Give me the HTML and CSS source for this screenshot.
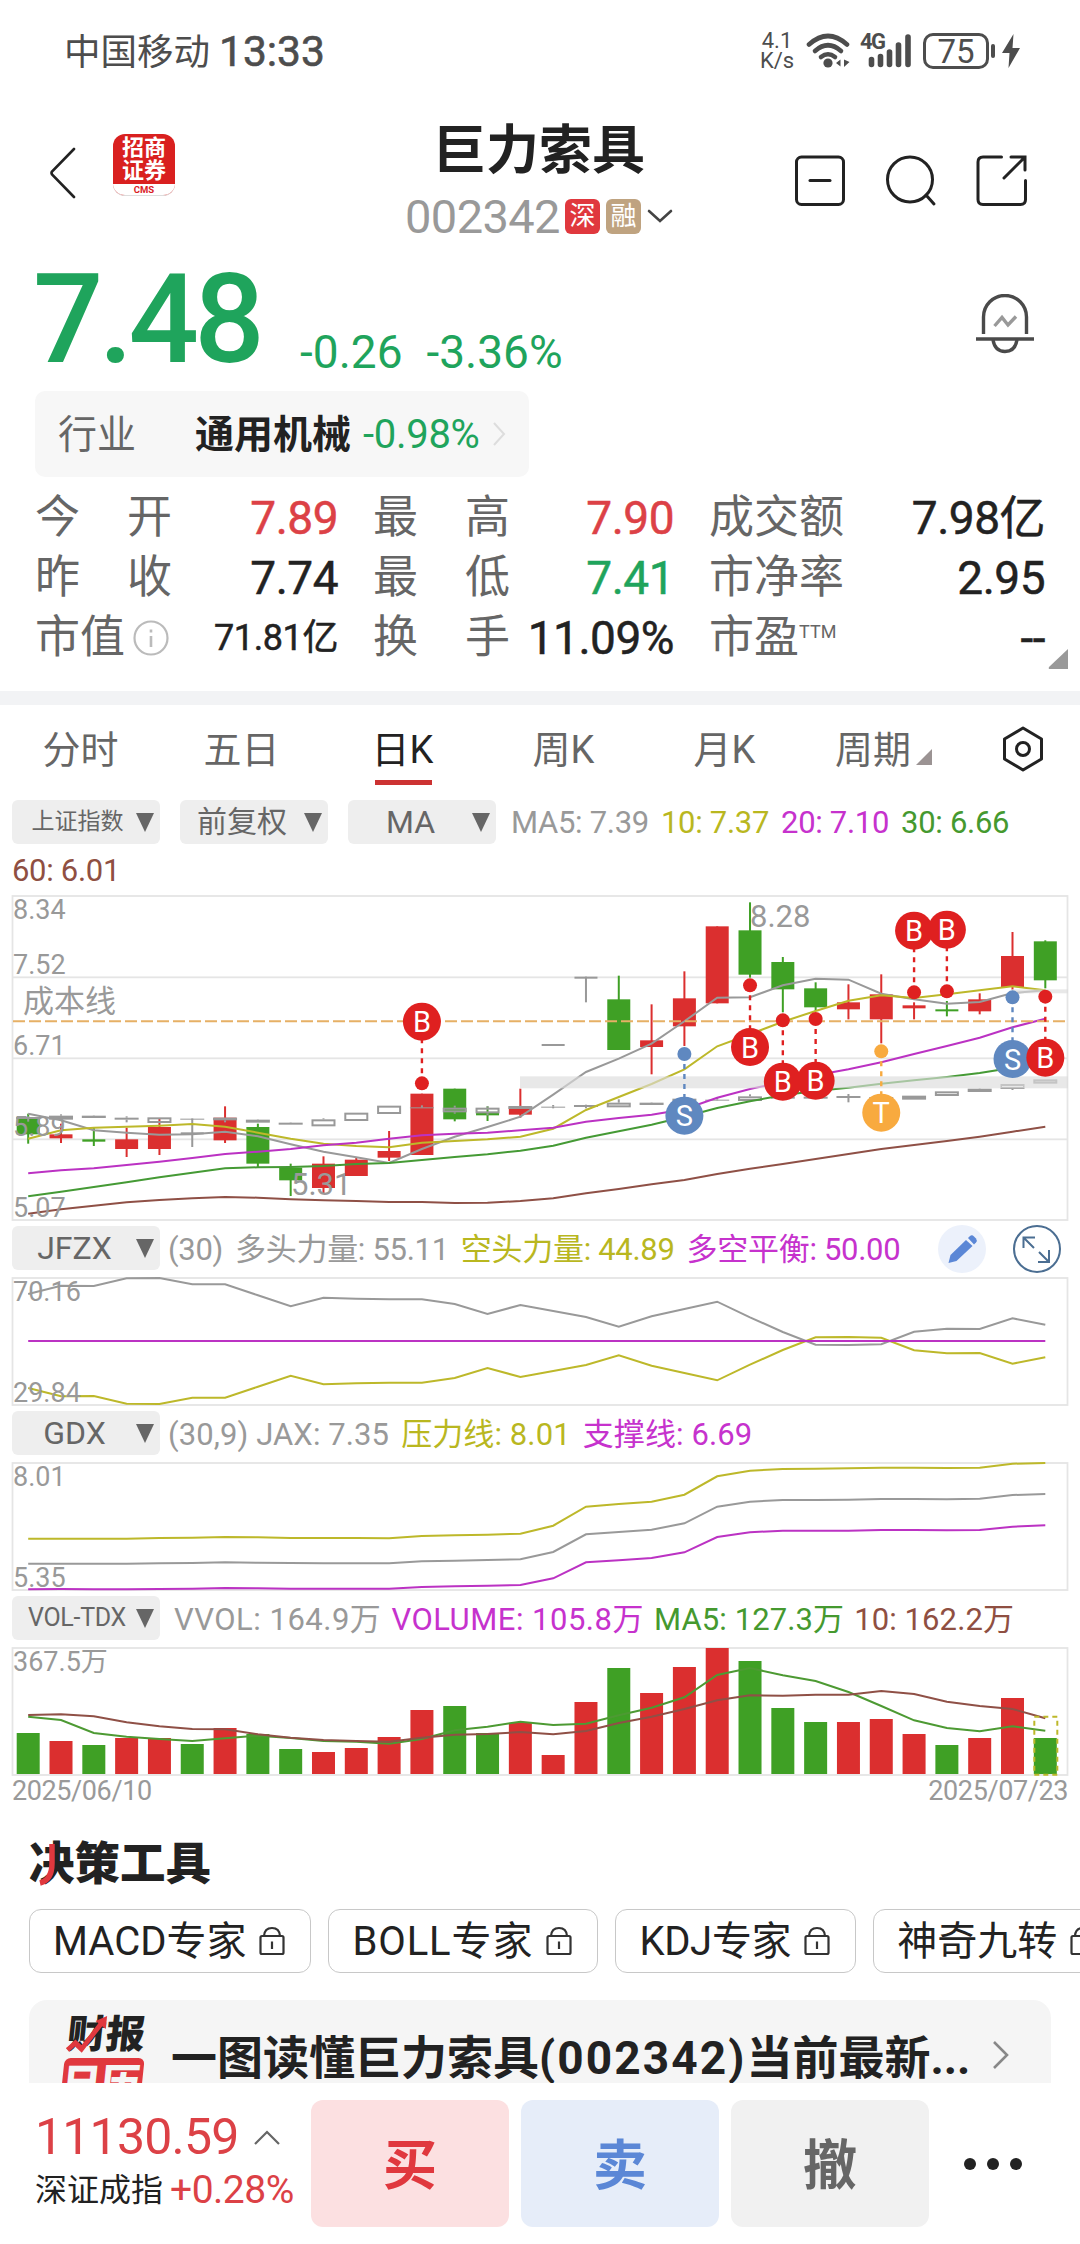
FILE: index.html
```html
<!DOCTYPE html>
<html lang="zh-CN">
<head>
    <meta charset="UTF-8">
    <meta name="viewport" content="width=device-width, initial-scale=1.0">
    <title>巨力索具 002342</title>
    <link rel="stylesheet" href="styles.css">
</head>
<body>
    <div class="status-bar">
        <span class="carrier">中国移动</span>
        <span class="clock">13:33</span>
        <div class="net-speed"><span>4.1</span><span>K/s</span></div>
        <svg class="wifi" width="46" height="36" viewBox="0 0 46 36">
            <g fill="none" stroke="#4d4d4d" stroke-width="4.6" stroke-linecap="round">
                <path d="M3 11.500Q22 -5.500 41 11.500"/>
                <path d="M9 18Q22 6.500 35 18"/>
                <path d="M15 24Q22 18.500 29 24"/>
            </g>
            <circle cx="22" cy="30" r="4.600" fill="#4d4d4d"/>
            <path d="M30 30L34.500 26.500V33.500ZM38 26.500L43.500 29L38 34Z" fill="#4d4d4d"/>
        </svg>
        <div class="signal">
            <span class="signal-type">4G</span>
            <svg width="46" height="36" viewBox="0 0 46 36">
                <path d="M4.500 26.500V31.500M13.500 23.500V31.500M22.500 19V31.500M31.500 12V31.500M41 4V31.500" stroke="#4d4d4d" stroke-width="5.600" stroke-linecap="round"/>
            </svg>
        </div>
        <div class="battery">75</div>
        <svg class="bolt" width="30" height="36" viewBox="0 0 30 36">
            <path d="M2 13V23" stroke="#4d4d4d" stroke-width="4" stroke-linecap="round"/>
            <path d="M22.500 1L11 20H18.500L17.500 35L29 15H21.500Z" fill="#4d4d4d"/>
        </svg>
    </div>

    <header class="header">
        <div class="header-left">
            <svg width="26" height="52" viewBox="0 0 26 52">
                <path d="M24 2L2 24.500Q1 26 2 27.500L24 50" fill="none" stroke="#222" stroke-width="2.600" stroke-linecap="round"/>
            </svg>
            <div class="logo">
                <div class="logo-name">招商<br>证券</div>
                <div class="logo-sub">CMS</div>
            </div>
        </div>
        <div class="header-title">
            <h1>巨力索具</h1>
            <div class="code-row">
                <span class="code">002342</span>
                <span class="badge badge-sz">深</span>
                <span class="badge badge-rz">融</span>
                <svg width="26" height="14" viewBox="0 0 26 14">
                    <path d="M2 2L13 12L24 2" fill="none" stroke="#444" stroke-width="2.600" stroke-linecap="round"/>
                </svg>
            </div>
        </div>
        <div class="header-icons">
            <svg width="52" height="52" viewBox="0 0 52 52">
                <rect x="2.500" y="2" width="47" height="47.500" rx="5"/>
                <path d="M16 25.500H36"/>
            </svg>
            <svg width="52" height="52" viewBox="0 0 52 52">
                <circle cx="25" cy="24.500" r="22.500"/>
                <path d="M41 40L49 49"/>
            </svg>
            <svg width="52" height="52" viewBox="0 0 52 52">
                <path d="M25.500 2H7Q2 2 2 7V44.500Q2 49.500 7 49.500H44.500Q49.500 49.500 49.500 44.500V25.500M35 2H49V15M49 2L28 23"/>
            </svg>
        </div>
    </header>

    <div class="quote">
        <span class="price">7.48</span>
        <span class="change">-0.26</span>
        <span class="change">-3.36%</span>
        <svg class="bell" width="58" height="60" viewBox="0 0 58 60">
            <g fill="none" stroke="#4a4a4a" stroke-width="3.400">
                <path d="M7.500 40V23A21.500 21.500 0 0 1 50.500 23V40"/>
                <path d="M0 45H58"/>
                <path d="M17 46Q19 57.500 29 57.500Q39 57.500 41 46"/>
                <path d="M18.500 32L26 23.500L32 31L40 22.500" stroke="#999"/>
            </g>
        </svg>
    </div>

    <div class="industry">
        <span class="industry-label">行业</span>
        <b>通用机械</b>
        <span class="down">-0.98%</span>
        <svg width="14" height="26" viewBox="0 0 14 26"><path d="M2 2L12 13L2 24" fill="none" stroke="#ddd" stroke-width="2"/></svg>
    </div>

    <div class="stats">
        <div class="stat"><span class="label"><i>今</i><i>开</i></span><span class="value up">7.89</span></div>
        <div class="stat"><span class="label"><i>最</i><i>高</i></span><span class="value up">7.90</span></div>
        <div class="stat"><span class="label">成交额</span><span class="value">7.98亿</span></div>
        <div class="stat"><span class="label"><i>昨</i><i>收</i></span><span class="value">7.74</span></div>
        <div class="stat"><span class="label"><i>最</i><i>低</i></span><span class="value down">7.41</span></div>
        <div class="stat"><span class="label">市净率</span><span class="value">2.95</span></div>
        <div class="stat">
            <span class="label">市值<svg width="36" height="36" viewBox="0 0 36 36"><circle cx="18" cy="18" r="16.500" fill="none" stroke="#bbb" stroke-width="2.200"/><path d="M18 16V27M18 9.500V12.500" stroke="#bbb" stroke-width="2.600"/></svg></span>
            <span class="value small">71.81亿</span>
        </div>
        <div class="stat"><span class="label"><i>换</i><i>手</i></span><span class="value">11.09%</span></div>
        <div class="stat"><span class="label">市盈<sup>TTM</sup></span><span class="value">--</span></div>
        <svg class="stats-more" width="20" height="20" viewBox="0 0 20 20"><path d="M20 0V20H2Q0 20 1 18Z" fill="#999"/></svg>
    </div>

    <div class="divider"></div>

    <nav class="tabs">
        <span class="tab">分时</span>
        <span class="tab">五日</span>
        <span class="tab active">日K</span>
        <span class="tab">周K</span>
        <span class="tab">月K</span>
        <span class="tab tab-period">周期<svg width="16" height="16" viewBox="0 0 16 16"><path d="M16 0V16H0Z" fill="#9b9393"/></svg></span>
        <svg class="settings" width="42" height="46" viewBox="0 0 42 46">
            <path d="M21 2L39.500 13V33L21 44L2.500 33V13Z" fill="none" stroke="#222" stroke-width="3" stroke-linejoin="round"/>
            <circle cx="21" cy="23" r="6.500" fill="none" stroke="#222" stroke-width="3"/>
        </svg>
    </nav>

    <div class="legend legend-main">
        <button class="select small">上证指数</button>
        <button class="select medium">前复权</button>
        <button class="select">MA</button>
        <span class="c-gray">MA5: 7.39</span>
        <span class="c-yellow">10: 7.37</span>
        <span class="c-magenta">20: 7.10</span>
        <span class="c-green">30: 6.66</span>
        <span class="c-brown">60: 6.01</span>
    </div>
    <svg class="chart" id="kline" width="1080" height="328"></svg>

    <div class="legend">
        <button class="select">JFZX</button>
        <span class="c-gray">(30)</span>
        <span class="c-gray">多头力量: 55.11</span>
        <span class="c-yellow">空头力量: 44.89</span>
        <span class="c-magenta">多空平衡: 50.00</span>
        <svg class="tools" width="124" height="50" viewBox="0 0 124 50">
            <circle cx="25" cy="25" r="24" fill="#ecf1fb"/>
            <path d="M11.500 39L13.500 31L29 16L35.500 22L19.500 37Z" fill="#5b87d6"/>
            <path d="M31 14L33 12Q35 10.500 37 12.500L39 14.500Q40.500 16.500 39 18.500L37 20.500Z" fill="#5b87d6"/>
            <g fill="none" stroke="#4b6e92" stroke-width="2">
                <circle cx="100" cy="25" r="23"/>
                <path d="M97 24L86.500 13.500M86.500 24V13.500H98M102 28L112 38M101 38H112V26"/>
            </g>
        </svg>
    </div>
    <svg class="chart" id="jfzx" width="1080" height="131"></svg>

    <div class="legend legend-gdx">
        <button class="select">GDX</button>
        <span class="c-gray">(30,9) JAX: 7.35</span>
        <span class="c-yellow">压力线: 8.01</span>
        <span class="c-magenta">支撑线: 6.69</span>
    </div>
    <svg class="chart" id="gdx" width="1080" height="131"></svg>

    <div class="legend legend-vol">
        <button class="select vol">VOL-TDX</button>
        <span class="c-gray">VVOL: 164.9万</span>
        <span class="c-magenta">VOLUME: 105.8万</span>
        <span class="c-green">MA5: 127.3万</span>
        <span class="c-brown">10: 162.2万</span>
    </div>
    <svg class="chart" id="volume" width="1080" height="131"></svg>
    <div class="dates"><span>2025/06/10</span><span>2025/07/23</span></div>

    <h2 class="section-title">决策工具
        <svg width="22" height="44" viewBox="0 0 22 44"><path d="M14 1V20Q14 37 2 40" fill="none" stroke="#e0383e" stroke-width="5.500"/></svg>
    </h2>
    <div class="chips">
        <span class="chip">MACD专家<svg width="26" height="30"><use href="#lock"/></svg></span>
        <span class="chip chip-boll">BOLL专家<svg width="26" height="30"><use href="#lock"/></svg></span>
        <span class="chip chip-kdj">KDJ专家<svg width="26" height="30"><use href="#lock"/></svg></span>
        <span class="chip">神奇九转<svg width="26" height="30"><use href="#lock"/></svg></span>
    </div>
    <div class="card">
        <div class="card-logo">
            <span class="card-logo-top">财报</span>
            <span class="card-logo-bottom">日历</span>
            <svg width="44" height="38" viewBox="0 0 44 38"><path d="M2 34L9 27L16 33L34 6" fill="none" stroke="#e0383e" stroke-width="5"/><path d="M27 5L38 0V13Z" fill="#e0383e"/></svg>
        </div>
        <b>一图读懂巨力索具<span>(002342)</span>当前最新...</b>
        <svg width="18" height="30" viewBox="0 0 18 30"><path d="M2 2L15 15L2 28" fill="none" stroke="#888" stroke-width="2.600"/></svg>
    </div>

    <footer class="trade-bar">
        <div class="index">
            <div class="index-value">11130.59<svg width="26" height="15" viewBox="0 0 26 15"><path d="M1 14L13 2L25 14" fill="none" stroke="#666" stroke-width="2.200"/></svg></div>
            <div class="index-name">深证成指<span>+0.28%</span></div>
        </div>
        <button class="buy">买</button>
        <button class="sell">卖</button>
        <button class="cancel">撤</button>
        <div class="more"><i></i><i></i><i></i></div>
    </footer>

    <svg width="0" height="0" class="defs">
        <symbol id="lock" viewBox="0 0 26 30">
            <g fill="none" stroke="#333" stroke-width="2.200">
                <rect x="1.500" y="10" width="23" height="18" rx="1.500"/>
                <path d="M5 10Q5.500 2 13 2Q20.500 2 21 10M13 15.500V23"/>
            </g>
        </symbol>
    </svg>

    <script src="script.js"></script>
</body>
</html>
```
FILE: styles.css
```css
* {
    box-sizing: border-box;
}
body {
    margin: 0;
    width: 1080px;
    height: 2244px;
    overflow: hidden;
    background-color: #fff;
    color: #222;
    font-family: Roboto, "Noto Sans CJK SC", sans-serif;
    display: flex;
    flex-direction: column;
}
svg {
    display: block;
    flex: none;
}
i {
    font-style: normal;
}
button {
    border: 0;
    padding: 0;
    font-family: inherit;
}
.defs {
    position: absolute;
}
.up {
    color: #dc4146;
}
.down {
    color: #1fa45c;
}

/* status bar */
.status-bar {
    height: 102px;
    padding: 0 59px 0 64px;
    display: flex;
    align-items: center;
    color: #4d4d4d;
    flex: none;
}
.carrier {
    font-size: 36.500px;
    padding-bottom: 4px;
}
.clock {
    margin-left: 9px;
    font-size: 42.500px;
    -webkit-text-stroke: 0.6px #4d4d4d;
}
.net-speed {
    margin-left: auto;
    width: 34px;
    font-size: 22px;
    line-height: 20px;
    display: flex;
    flex-direction: column;
    align-items: center;
}
.wifi {
    margin-left: 12px;
}
.signal {
    position: relative;
    margin-left: 15px;
}
.signal-type {
    position: absolute;
    left: -7px;
    top: 0;
    font-size: 22px;
    line-height: 18px;
    font-weight: 700;
    letter-spacing: -1.5px;
}
.battery {
    width: 66px;
    height: 36px;
    margin-left: 10px;
    border: 3px solid #4d4d4d;
    border-radius: 10px;
    font-size: 33px;
    line-height: 31px;
    text-align: center;
}
.bolt {
    margin-left: 2px;
}

/* header */
.header {
    height: 150px;
    padding: 0 52px 0 50px;
    display: grid;
    grid-template-columns: 1fr auto 1fr;
    flex: none;
}
.header-left {
    display: flex;
    gap: 37px;
    padding-top: 45px;
}
.logo {
    width: 62px;
    height: 62px;
    margin-top: -13px;
    border-radius: 12px;
    background-color: #d9201f;
    overflow: hidden;
    border-bottom: 1px solid #ddd;
}
.logo-name {
    height: 50px;
    padding-top: 2px;
    color: #fff;
    font-size: 22px;
    font-weight: 700;
    line-height: 23px;
    text-align: center;
}
.logo-sub {
    height: 12px;
    background-color: #fff;
    color: #d9201f;
    font-size: 9.500px;
    font-weight: 700;
    line-height: 11px;
    text-align: center;
}
.header-title {
    text-align: center;
}
.header-title h1 {
    margin: 12px 0 0;
    font-size: 53px;
    line-height: 74px;
    font-weight: 700;
}
.code-row {
    display: flex;
    align-items: center;
    height: 56px;
}
.code {
    color: #999;
    font-size: 47px;
    letter-spacing: -0.6px;
    margin-right: 5px;
}
.badge {
    width: 35px;
    height: 35px;
    border-radius: 6px;
    color: #fff;
    font-size: 26px;
    line-height: 34px;
    margin-right: 6px;
}
.badge-sz {
    background-color: #e0383e;
}
.badge-rz {
    background-color: #bfa380;
}
.header-icons {
    display: flex;
    justify-content: flex-end;
    gap: 39px;
    padding-top: 53px;
}
.header-icons svg {
    fill: none;
    stroke: #222;
    stroke-width: 3;
    stroke-linecap: round;
}

/* quote */
.quote {
    height: 139px;
    padding: 0 46px 0 33px;
    display: flex;
    align-items: flex-start;
    color: #1fa45c;
    flex: none;
}
.price {
    margin: 2px 40px 0 0;
    font-size: 124px;
    line-height: 132px;
    font-weight: 500;
    letter-spacing: -4.7px;
}
.change {
    margin: 73px 24px 0 0;
    font-size: 46px;
    line-height: 54px;
}
.bell {
    margin: 42px 0 0 auto;
}

.industry {
    width: 494px;
    height: 86px;
    margin-left: 35px;
    padding: 0 0 6px 23px;
    border-radius: 10px;
    background-color: #f7f7f7;
    display: flex;
    align-items: center;
    font-size: 39px;
    flex: none;
}
.industry-label {
    width: 137px;
    color: #666;
}
.industry .down {
    margin: 6px 0 0 12px;
    font-size: 40px;
    letter-spacing: -0.3px;
}
.industry svg {
    margin: 5px 0 0 12px;
}

.stats {
    position: relative;
    height: 214px;
    padding: 11px 36px 0 35px;
    display: grid;
    grid-template-columns: 302px 300px 335px;
    grid-template-rows: repeat(3, 60px);
    column-gap: 36px;
    flex: none;
}
.stat {
    display: flex;
    justify-content: space-between;
    align-items: center;
    line-height: 60px;
    white-space: nowrap;
}
.label {
    width: 137px;
    color: #666;
    font-size: 45px;
    display: flex;
    justify-content: space-between;
    align-items: center;
}
.label svg {
    margin-right: 3px;
}
.stat sup {
    font-size: 18px;
    line-height: 24px;
    margin: 0 auto 12px 0;
}
.value {
    font-size: 46px;
    letter-spacing: -0.5px;
    margin-right: -1px;
    -webkit-text-stroke: 0.5px;
}
.value.small {
    font-size: 36px;
    letter-spacing: -0.4px;
}
.stats-more {
    position: absolute;
    right: 12px;
    bottom: 22px;
}
.divider {
    height: 14px;
    background-color: #f2f3f5;
    flex: none;
}

/* period tabs */
.tabs {
    height: 95px;
    padding: 0 36px 6px 0;
    display: flex;
    align-items: center;
    color: #666;
    font-size: 38px;
    flex: none;
}
.tab {
    width: 161px;
    height: 86px;
    line-height: 86px;
    display: flex;
    justify-content: center;
    align-items: center;
    position: relative;
}
.tab svg {
    margin: 15px 0 0 5px;
}
.tab-period {
    margin-left: -2px;
}
.tab.active {
    color: #222;
}
.tab.active::after {
    content: "";
    position: absolute;
    left: 53px;
    bottom: 8px;
    width: 57px;
    height: 5px;
    background-color: #cc3232;
}
.settings {
    margin: -2px 0 0 auto;
}

/* indicator legends */
.legend {
    height: 56px;
    padding: 5px 12px 0;
    display: flex;
    flex-wrap: wrap;
    font-size: 31px;
    line-height: 47px;
    letter-spacing: -0.3px;
    white-space: nowrap;
    column-gap: 12px;
    position: relative;
    flex: none;
}
.legend-main {
    height: 95px;
    padding-top: 0;
    line-height: 45px;
}
.legend-main .select {
    margin-right: 8px;
}
.legend-main .select + .c-gray {
    margin-left: -5px;
}
.select {
    width: 148px;
    height: 44px;
    border-radius: 6px;
    background-color: #eee;
    color: #666;
    font-size: 32px;
    line-height: 44px;
    display: flex;
    justify-content: space-between;
    align-items: center;
    padding-right: 6px;
    margin-right: -4px;
}
.select::before {
    content: "";
    width: 1px;
}
.select::after {
    content: "";
    border: 9px solid transparent;
    border-top: 19px solid #666;
    border-bottom: 0;
}
.select.medium {
    font-size: 30px;
}
.select.small {
    font-size: 23px;
}
.select.small::before {
    width: 7px;
}
.select.vol {
    font-size: 25px;
    letter-spacing: -0.3px;
    margin-right: 4px;
}
.select.medium::before {
    width: 0;
}
.select.vol::before {
    width: 6px;
}
.tools {
    position: absolute;
    right: 19px;
    top: 3px;
}
.c-gray { color: #999; }
.c-yellow { color: #b9b71f; }
.c-magenta { color: #c632cd; }
.c-green { color: #45992f; }
.c-brown { color: #8f4f42; }
.legend-gdx {
    letter-spacing: 0.1px;
}
.legend-vol {
    letter-spacing: 0.1px;
    column-gap: 10px;
}
.legend-vol .c-gray,
.legend-vol .c-magenta {
    letter-spacing: 0.5px;
}

.chart {
    margin-bottom: -2px;
}
.chart text {
    fill: #999;
    font-size: 27px;
}
.chart .note {
    font-size: 31px;
}
.chart .mark {
    fill: #fff;
    font-size: 29px;
    text-anchor: middle;
}
.dates {
    height: 37px;
    padding: 0 12px;
    display: flex;
    justify-content: space-between;
    color: #999;
    font-size: 27px;
    letter-spacing: -0.4px;
    line-height: 31px;
    flex: none;
}

/* tools */
.section-title {
    position: relative;
    height: 96px;
    margin: 0;
    padding: 19px 0 0 29px;
    font-size: 45.500px;
    line-height: 66px;
    font-weight: 900;
    flex: none;
}
.section-title svg {
    position: absolute;
    left: 38px;
    top: 30px;
}
.chips {
    display: flex;
    gap: 17px;
    padding-left: 29px;
    flex: none;
}
.chip {
    height: 64px;
    padding: 2px 25px 0 23px;
    border: 1.500px solid #c8c8c8;
    border-radius: 12px;
    font-size: 40px;
    line-height: 62px;
    white-space: nowrap;
    display: flex;
    align-items: center;
    gap: 13px;
    flex: none;
}
.chip-boll {
    letter-spacing: 0.9px;
}
.chip-kdj {
    letter-spacing: -0.3px;
}
.chip svg {
    margin-top: -3px;
}
.card {
    height: 110px;
    margin: 27px 29px 0;
    padding: 0 41px 0 36px;
    border-radius: 18px;
    background-color: #f5f5f5;
    display: flex;
    align-items: center;
    font-size: 46px;
    white-space: nowrap;
    flex: none;
}
.card b {
    margin-top: -2px;
}
.card b span {
    letter-spacing: 2.1px;
}
.card > svg {
    margin-left: auto;
}
.card-logo {
    position: relative;
    height: 78px;
    width: 80px;
    margin-right: 26px;
    font-weight: 900;
    transform: skewX(-6deg);
}
.card-logo svg {
    position: absolute;
    left: 0;
    top: 0;
}
.card-logo-top,
.card-logo-bottom {
    display: block;
    font-size: 39px;
    line-height: 38px;
}
.card-logo-bottom {
    margin-top: 4px;
    line-height: 52px;
    border-radius: 6px;
    background-color: #e0383e;
    color: #f5f5f5;
}

/* bottom bar */
.trade-bar {
    position: absolute;
    left: 0;
    top: 2083px;
    width: 1080px;
    height: 161px;
    padding: 17px 0 0 35px;
    background-color: #fff;
    display: flex;
    gap: 12px;
}
.index {
    width: 264px;
    white-space: nowrap;
}
.index-value {
    height: 72px;
    padding-top: 2px;
    color: #dc4146;
    font-size: 50px;
    letter-spacing: -0.8px;
    display: flex;
    align-items: center;
    gap: 15px;
}
.index-name {
    font-size: 32px;
    line-height: 36px;
    display: flex;
    align-items: center;
    gap: 7px;
}
.index-name span {
    color: #dc4146;
    font-size: 39px;
    letter-spacing: -0.5px;
}
.trade-bar button {
    width: 198px;
    height: 127px;
    padding-bottom: 5px;
    border-radius: 12px;
    font-size: 54px;
    font-weight: 700;
}
.buy {
    background-color: #fce0e1;
    color: #e0383e;
}
.sell {
    background-color: #e6edf9;
    color: #5b87d6;
}
.cancel {
    background-color: #f1f1f1;
    color: #666;
}
.more {
    height: 127px;
    margin-left: 23px;
    display: flex;
    align-items: center;
    gap: 11px;
}
.more i {
    width: 12px;
    height: 12px;
    border-radius: 50%;
    background-color: #222;
}
```
FILE: script.js
```js
const RED = '#db2f2f';
const GREEN = '#3fa025';
const GRAY = '#999';
const YELLOW = '#bdb82a';
const MAGENTA = '#bb32c3';
const BROWN = '#8f5046';

const STEP = 32.81;
const xAt = i => 28.2 + i * STEP;

function line(points, y, color) {
    const d = points.map((v, i) => xAt(i).toFixed(1) + ',' + y(v).toFixed(1)).join(' ');
    return `<polyline points="${d}" fill="none" stroke="${color}" stroke-width="2"/>`;
}
function rect(x, y, w, h, attrs) {
    return `<rect x="${x}" y="${y}" width="${w}" height="${h}" ${attrs}/>`;
}
function frame(h) {
    return rect(12.5, 1, 1055, h, 'fill="none" stroke="#e5e5e5" stroke-width="1.8"');
}
function label(x, y, text, cls) {
    return `<text x="${x}" y="${y}" class="${cls || ''}">${text}</text>`;
}

// Candles and averages, three units to a pixel
function drawKline() {
    const y = v => (v - 44) / 3;
    // colour, high, body top, body bottom, low
    const candles = [
        ['g', 700, 710, 762, 790], ['r', 730, 762, 774, 788], ['g', 740, 777, 784, 797], ['r', 742, 777, 806, 830],
        ['r', 715, 740, 806, 824], ['n', 715, 756, 762, 800], ['r', 678, 712, 780, 788], ['g', 730, 740, 850, 860],
        ['g', 850, 862, 900, 947], ['r', 828, 850, 923, 940], ['r', 832, 838, 887, 887], ['r', 752, 812, 832, 842],
        ['r', 640, 640, 824, 824], ['g', 625, 625, 717, 723], ['g', 678, 698, 705, 722], ['r', 625, 680, 703, 712],
        ['n', 491, 491, 497, 497], ['n', 289, 289, 295, 366], ['g', 286, 357, 509, 509], ['r', 372, 480, 500, 582],
        ['r', 273, 354, 438, 497], ['r', 138, 138, 369, 369], ['g', 66, 150, 283, 292], ['g', 230, 245, 327, 396],
        ['g', 306, 324, 381, 392], ['r', 312, 366, 387, 417], ['r', 282, 342, 417, 489], ['r', 366, 375, 384, 417],
        ['g', 362, 387, 393, 408], ['r', 339, 357, 393, 402], ['r', 155, 227, 320, 328], ['g', 180, 183, 300, 324]
    ];
    // Shanghai index overlay
    const index = [
        [708, 710, 716, 724], [702, 706, 718, 718], [705, 706, 713, 713], [708, 712, 718, 726],
        [711, 711, 728, 728], [714, 715, 716, 718], [711, 712, 720, 726], [717, 718, 727, 727],
        [726, 727, 733, 733], [714, 717, 738, 738], [697, 697, 722, 722], [676, 676, 701, 701],
        [675, 681, 682, 683], [676, 682, 696, 700], [678, 682, 699, 705], [676, 677, 686, 686],
        [674, 679, 680, 684], [673, 674, 680, 684], [657, 667, 681, 681], [666, 667, 674, 674],
        [654, 655, 662, 662], [650, 658, 659, 660], [642, 648, 662, 662], [648, 649, 655, 655],
        [648, 649, 655, 655], [641, 647, 653, 666], [649, 650, 655, 655], [646, 646, 658, 658],
        [633, 633, 647, 647], [624, 625, 635, 635], [611, 611, 626, 629], [597, 597, 610, 610]
    ];
    const ma5 = [700, 720, 750, 757, 763, 762, 754, 768, 792, 814, 831, 848, 806, 769, 740, 709, 643, 575, 535, 490, 423, 352, 351, 315, 295, 298, 340, 357, 370, 365, 338, 330];
    const ma10 = [775, 750, 742, 739, 736, 731, 739, 757, 775, 790, 797, 801, 787, 782, 777, 769, 745, 689, 650, 611, 567, 498, 462, 424, 392, 361, 345, 353, 342, 330, 318, 330];
    const ma20 = [879, 870, 864, 854, 844, 833, 821, 814, 806, 795, 787, 775, 765, 760, 757, 750, 742, 724, 713, 703, 687, 652, 626, 605, 585, 567, 546, 521, 497, 472, 441, 415];
    const ma30 = [948, 934, 920, 906, 891, 877, 864, 861, 860, 857, 851, 848, 839, 830, 822, 811, 796, 772, 753, 733, 709, 683, 663, 645, 632, 622, 610, 600, 590, 578, 562, 550];
    const ma60 = [1000, 987, 976, 966, 959, 954, 950, 952, 957, 960, 962, 965, 965, 968, 967, 962, 954, 939, 926, 912, 899, 881, 865, 851, 836, 821, 806, 794, 782, 769, 754, 739];
    // bar, letter, colour, dot, badge
    const marks = [
        [12, 'B', '#df2020', 609, 424], [20, 'S', '#5f88c0', 521, 706], [22, 'B', '#df2020', 315, 500],
        [23, 'B', '#df2020', 420, 604], [24, 'B', '#df2020', 416, 601], [26, 'T', '#f8aa3f', 513, 697],
        [27, 'B', '#df2020', 336, 151], [28, 'B', '#df2020', 333, 148], [30, 'S', '#5f88c0', 351, 536],
        [31, 'B', '#df2020', 349, 532]
    ];
    const colors = { r: RED, g: GREEN, n: GRAY };

    let out = frame(324);
    for (const v of [291, 534, 777]) {
        out += rect(13, y(v) - 0.9, 1055, 1.8, 'fill="#e5e5e5"');
    }
    candles.forEach(([c, high, top, bottom, low], i) => {
        out += rect(xAt(i) - 1, y(high), 2, (low - high) / 3, `fill="${colors[c]}"`);
        out += rect(xAt(i) - 11.5, y(top), 23, (bottom - top) / 3, `fill="${colors[c]}"`);
    });
    index.forEach(([high, top, bottom, low], i) => {
        const h = (bottom - top) / 3;
        out += rect(xAt(i) - 1, y(high), 2, (top - high) / 3, `fill="${GRAY}"`);
        out += rect(xAt(i) - 1, y(bottom), 2, (low - bottom) / 3, `fill="${GRAY}"`);
        if (h > 3.2) {
            out += rect(xAt(i) - 11, y(top) + 1, 22, h - 2, `fill="none" stroke="${GRAY}" stroke-width="2"`);
        } else {
            out += rect(xAt(i) - 12, y(top), 24, Math.max(h, 1), `fill="${GRAY}"`);
        }
    });
    out += line(ma5, y, GRAY) + line(ma10, y, YELLOW) + line(ma20, y, MAGENTA);
    out += line(ma30, y, '#459a35') + line(ma60, y, BROWN);
    out += rect(520, y(588), 548, 12, 'fill="#dcdcdc" fill-opacity="0.65"');
    out += rect(1012, y(327), 56, 4, 'fill="#dcdcdc" fill-opacity="0.65"');
    out += `<path d="M13 ${y(423)}H1067" stroke="#e6b065" stroke-width="2" stroke-dasharray="12 4"/>`;

    out += label(13, y(117), '8.34') + label(13, y(281), '7.52') + label(13, y(525), '6.71');
    out += label(13, y(767), '5.89') + label(13, y(1010), '5.07');
    out += label(23, y(395), '成本线', 'note') + label(750, y(141), '8.28', 'note') + label(291, y(944), '5.31', 'note');

    for (const [i, letter, color, dot, badge] of marks) {
        const x = xAt(i);
        out += `<path d="M${x} ${y(dot)}V${y(badge)}" stroke="${color}" stroke-width="2.4" stroke-dasharray="5 5"/>`;
        out += `<circle cx="${x}" cy="${y(dot)}" r="7" fill="${color}"/>`;
        out += `<circle cx="${x}" cy="${y(badge)}" r="19" fill="${color}"/>`;
        out += label(x, y(badge) + 10.5, letter, 'mark');
    }
    document.getElementById('kline').innerHTML = out;
}

function drawJfzx() {
    const y = v => (v - 171) / 3;
    const bull = [222, 197, 198, 175, 174, 193, 193, 226, 259, 233, 236, 238, 238, 252, 282, 255, 273, 291, 320, 289, 267, 245, 292, 336, 374, 375, 373, 335, 326, 327, 295, 314];
    const bear = bull.map(v => 726 - v);
    document.getElementById('jfzx').innerHTML = frame(127) +
        line(bull, y, GRAY) + line(bear, y, YELLOW) + line(bull.map(() => 363), y, MAGENTA) +
        label(13, y(243), '70.16') + label(13, y(547), '29.84');
}

function drawGdx() {
    const y = v => (v - 726) / 3;
    const jax = [1031, 1031, 1031, 1031, 1030, 1029, 1027, 1028, 1029, 1030, 1030, 1030, 1024, 1022, 1020, 1018, 996, 943, 936, 929, 910, 860, 845, 840, 840, 839, 837, 837, 838, 836, 825, 822];
    const upper = [956, 956, 956, 956, 954, 953, 951, 952, 954, 954, 954, 955, 948, 946, 944, 941, 917, 860, 852, 845, 824, 769, 752, 747, 746, 745, 743, 743, 744, 743, 731, 729];
    const lower = [1108, 1107, 1108, 1108, 1107, 1106, 1104, 1105, 1106, 1106, 1106, 1106, 1101, 1099, 1097, 1095, 1075, 1027, 1021, 1014, 997, 951, 937, 932, 932, 932, 930, 930, 931, 930, 920, 916];
    document.getElementById('gdx').innerHTML = frame(127) +
        line(jax, y, GRAY) + line(upper, y, YELLOW) + line(lower, y, MAGENTA) +
        label(13, y(797), '8.01') + label(13, y(1100), '5.35');
}

function drawVolume() {
    const y = v => (v - 171) / 3;
    const tops = [429, 453, 465, 444, 444, 462, 414, 432, 477, 486, 474, 441, 360, 348, 429, 399, 495, 336, 234, 309, 231, 174, 213, 354, 396, 396, 387, 432, 465, 444, 324, 444];
    const colors = 'grgrrgrggrrrrggrrrgrrrgggrrrgrrg';
    const ma5 = [380, 390, 429, 440, 447, 453, 445, 437, 444, 453, 455, 461, 447, 421, 410, 395, 405, 401, 376, 353, 322, 255, 234, 256, 273, 306, 348, 391, 414, 424, 409, 422];
    const ma10 = [375, 373, 379, 397, 409, 417, 418, 433, 443, 450, 453, 455, 443, 434, 432, 426, 433, 423, 399, 380, 357, 331, 316, 317, 314, 314, 303, 312, 335, 348, 357, 385];
    let out = frame(127);
    tops.forEach((v, i) => {
        out += rect(xAt(i) - 11.5, y(v), 23, (552 - v) / 3, `fill="${colors[i] === 'r' ? RED : GREEN}"`);
    });
    out += line(ma5, y, '#4d9a33') + line(ma10, y, BROWN);
    out += rect(xAt(31) - 11, y(380), 23, 58, 'fill="none" stroke="#bdb82a" stroke-width="2" stroke-dasharray="5 4"');
    out += label(13, y(243), '367.5万');
    document.getElementById('volume').innerHTML = out;
}

drawKline();
drawJfzx();
drawGdx();
drawVolume();
```
